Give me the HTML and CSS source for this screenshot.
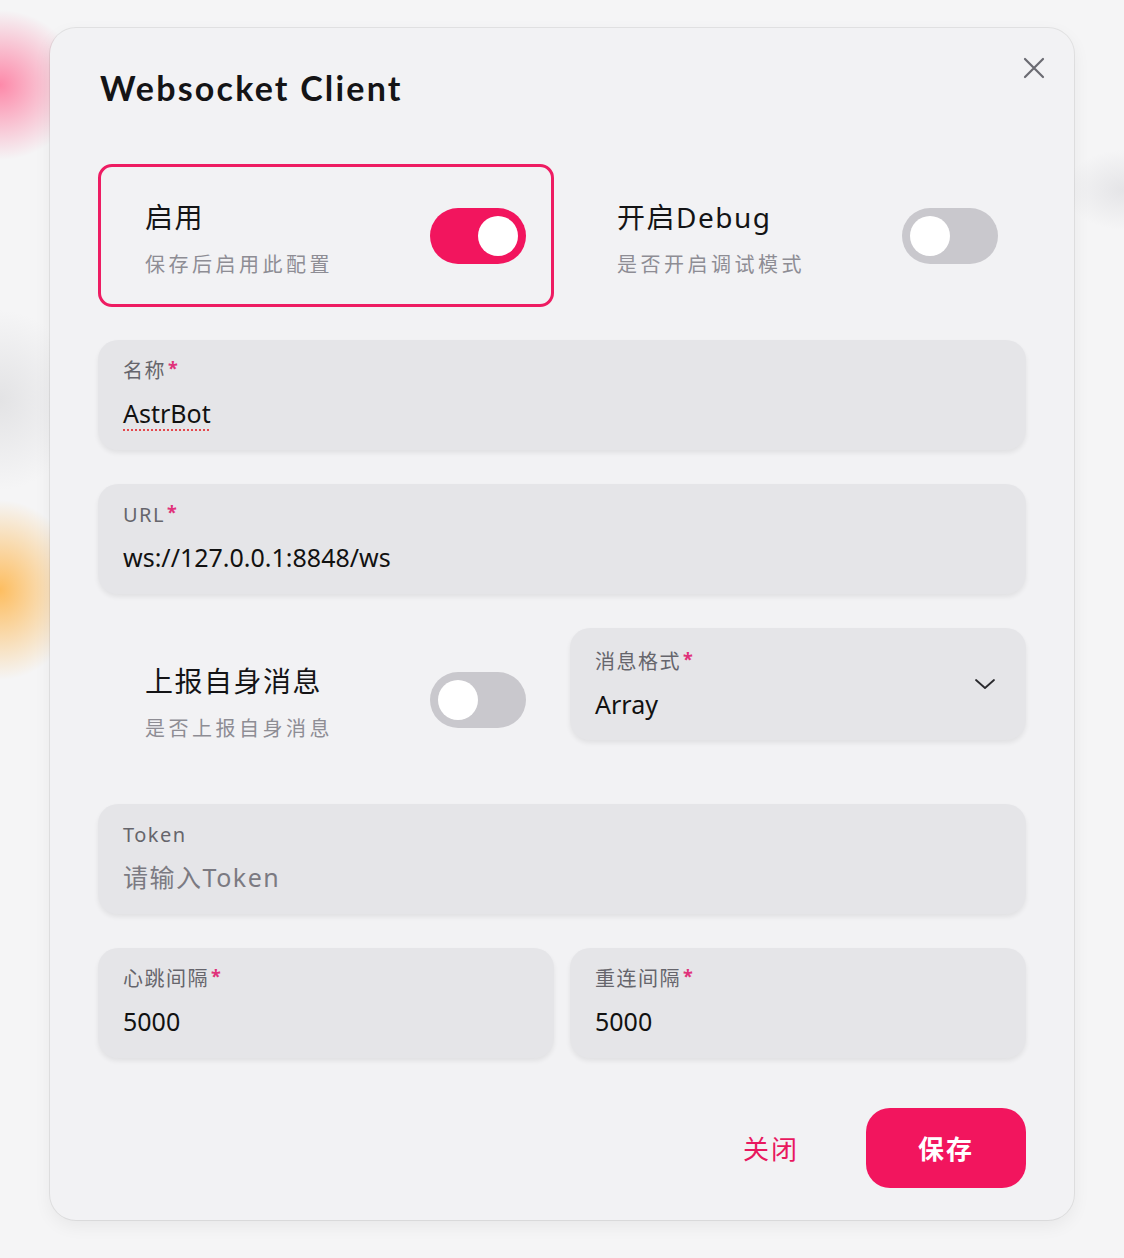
FILE: index.html
```html
<!DOCTYPE html>
<html lang="zh-CN">
<head>
    <meta charset="UTF-8">
    <meta name="viewport" content="width=device-width, initial-scale=1.0">
    <title>Websocket Client</title>
    <link rel="stylesheet" href="styles.css">
</head>
<body>
    <div class="page">
        <div class="dialog">
            <button class="close-x" aria-label="关闭">
                <svg width="24" height="24" viewBox="0 0 24 24"><path d="M3 3L21 21M21 3L3 21" stroke="#6b6b72" stroke-width="2.2" stroke-linecap="round" fill="none"/></svg>
            </button>
            <h1 class="title">Websocket Client</h1>

            <div class="grid">
                <div class="switch-card active">
                    <div class="switch-text">
                        <div class="switch-title">启用</div>
                        <div class="switch-sub">保存后启用此配置</div>
                    </div>
                    <div class="toggle on"><span class="knob"></span></div>
                </div>
                <div class="switch-card">
                    <div class="switch-text">
                        <div class="switch-title">开启Debug</div>
                        <div class="switch-sub">是否开启调试模式</div>
                    </div>
                    <div class="toggle"><span class="knob"></span></div>
                </div>
            </div>

            <div class="field wide">
                <div class="label">名称<span class="req">*</span></div>
                <div class="value"><span class="spell">AstrBot</span></div>
            </div>

            <div class="field wide">
                <div class="label">URL<span class="req">*</span></div>
                <div class="value">ws://127.0.0.1:8848/ws</div>
            </div>

            <div class="grid">
                <div class="switch-card">
                    <div class="switch-text">
                        <div class="switch-title">上报自身消息</div>
                        <div class="switch-sub">是否上报自身消息</div>
                    </div>
                    <div class="toggle"><span class="knob"></span></div>
                </div>
                <div class="field select">
                    <div>
                        <div class="label">消息格式<span class="req">*</span></div>
                        <div class="value">Array</div>
                    </div>
                    <svg class="chevron" width="22" height="14" viewBox="0 0 22 14"><path d="M2 3L11 11L20 3" stroke="#2a2a2e" stroke-width="1.8" stroke-linecap="round" stroke-linejoin="round" fill="none"/></svg>
                </div>
            </div>

            <div class="field wide">
                <div class="label">Token</div>
                <div class="value placeholder">请输入Token</div>
            </div>

            <div class="grid">
                <div class="field">
                    <div class="label">心跳间隔<span class="req">*</span></div>
                    <div class="value">5000</div>
                </div>
                <div class="field">
                    <div class="label">重连间隔<span class="req">*</span></div>
                    <div class="value">5000</div>
                </div>
            </div>

            <div class="actions">
                <button class="btn-text">关闭</button>
                <button class="btn-primary">保存</button>
            </div>
        </div>
    </div>
</body>
</html>
```

FILE: styles.css
```css
body {
    margin: 0;
    font-family: "Noto Sans", "Noto Sans CJK SC", sans-serif;
    background:
        radial-gradient(ellipse 80px 75px at 0 85px, rgba(255, 110, 150, 0.8), rgba(255, 110, 150, 0) 100%),
        radial-gradient(ellipse 80px 90px at 0 590px, rgba(255, 180, 70, 0.85), rgba(255, 180, 70, 0) 100%),
        radial-gradient(ellipse 80px 90px at 0 400px, rgba(205, 205, 208, 0.45), rgba(205, 205, 208, 0) 100%),
        radial-gradient(ellipse 60px 40px at 1124px 190px, rgba(212, 212, 216, 0.5), rgba(212, 212, 216, 0) 100%),
        #f5f5f6;
    color: #1a1a1e;
}
.page {
    padding: 28px 50px 38px;
}
.dialog {
    position: relative;
    background: #f2f2f4;
    border-radius: 26px;
    box-shadow: 0 0 0 1px rgba(0, 0, 0, 0.07), 0 6px 18px rgba(0, 0, 0, 0.06);
    padding: 36px 48px 32px;
    min-height: 1124px;
}
.close-x {
    position: absolute;
    top: 28px;
    right: 28px;
    width: 24px;
    height: 24px;
    padding: 0;
    border: none;
    background: none;
    display: flex;
}
.title {
    margin: 0 0 52px 2px;
    font-family: "Lato", "Noto Sans CJK SC", sans-serif;
    font-size: 34px;
    line-height: 48px;
    font-weight: 700;
    letter-spacing: 2.2px;
    color: #141416;
}
.grid {
    display: grid;
    grid-template-columns: 1fr 1fr;
    gap: 16px;
    align-items: start;
    margin-bottom: 33px;
}
.switch-card {
    height: 143px;
    box-sizing: border-box;
    border: 3px solid transparent;
    border-radius: 14px;
    padding: 0 25px 0 44px;
    display: flex;
    align-items: center;
    justify-content: space-between;
}
.switch-card.active {
    border-color: #ee1c62;
}
.switch-text {
    padding-top: 6px;
}
.switch-title {
    font-size: 28px;
    line-height: 36px;
    color: #141416;
    letter-spacing: 1.5px;
}
.switch-sub {
    margin-top: 16px;
    font-size: 20px;
    line-height: 28px;
    color: #8e8d94;
    letter-spacing: 3.5px;
}
.toggle {
    width: 96px;
    height: 56px;
    border-radius: 28px;
    background: #c9c8cd;
    display: flex;
    align-items: center;
    padding: 0 8px;
    box-sizing: border-box;
}
.toggle.on {
    background: #f2155e;
    justify-content: flex-end;
}
.knob {
    width: 40px;
    height: 40px;
    border-radius: 50%;
    background: #fff;
}
.field {
    height: 110px;
    box-sizing: border-box;
    background: #e5e5e8;
    border-radius: 20px;
    padding: 17px 25px 0;
    box-shadow: 0 3px 5px rgba(0, 0, 0, 0.07);
}
.field.wide {
    margin-bottom: 34px;
}
.field.select {
    height: 112px;
    display: flex;
    justify-content: space-between;
    align-items: center;
    padding-top: 0;
    padding-right: 30px;
}
.label {
    font-size: 20px;
    line-height: 28px;
    color: #66656c;
    letter-spacing: 1.5px;
}
.req {
    color: #e0327a;
    font-size: 18px;
    font-weight: 700;
    vertical-align: top;
    line-height: 22px;
    margin-left: 2px;
}
.value {
    margin-top: 11px;
    font-size: 25px;
    line-height: 34px;
    color: #111;
}
.value.placeholder {
    color: #7b7a82;
    letter-spacing: 1.5px;
}
.spell {
    text-decoration: underline dotted #e5484d;
    text-underline-offset: 6px;
    text-decoration-thickness: 2px;
}
.actions {
    display: flex;
    justify-content: flex-end;
    align-items: center;
    gap: 40px;
    margin-top: 50px;
}
.btn-text {
    width: 110px;
    height: 80px;
    border: none;
    background: none;
    font-family: inherit;
    font-size: 26px;
    color: #e8185f;
    letter-spacing: 2px;
}
.btn-primary {
    width: 160px;
    height: 80px;
    border: none;
    border-radius: 24px;
    background: #f2155e;
    color: #fff;
    font-family: inherit;
    font-size: 26px;
    font-weight: 700;
    letter-spacing: 2px;
}
```
